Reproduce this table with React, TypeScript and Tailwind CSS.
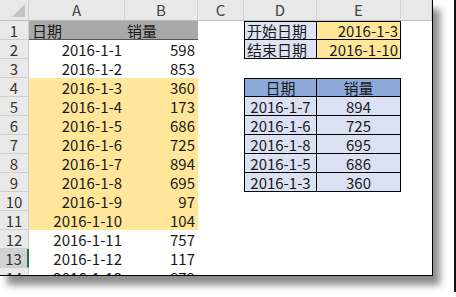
const sales: [string, number][] = [
  ["2016-1-1", 598],
  ["2016-1-2", 853],
  ["2016-1-3", 360],
  ["2016-1-4", 173],
  ["2016-1-5", 686],
  ["2016-1-6", 725],
  ["2016-1-7", 894],
  ["2016-1-8", 695],
  ["2016-1-9", 97],
  ["2016-1-10", 104],
  ["2016-1-11", 757],
  ["2016-1-12", 117],
  ["2016-1-13", 879],
]

const top5: [string, number][] = [
  ["2016-1-7", 894],
  ["2016-1-6", 725],
  ["2016-1-8", 695],
  ["2016-1-5", 686],
  ["2016-1-3", 360],
]

const letters = [
  { l: "A", w: "w-[96px]" },
  { l: "B", w: "w-[73px]" },
  { l: "C", w: "w-[46px]" },
  { l: "D", w: "w-[73px]" },
  { l: "E", w: "w-[84px]" },
  { l: "", w: "w-[31px]" },
]

const SideCells = ({ row }: { row: number }) => {
  if (row === 1 || row === 2) {
    const first = row === 1
    return (
      <>
        <div className={`w-[73px] shrink-0 flex items-center pl-[2px] bg-[#dde3f2] border-l border-r border-b border-black ${first ? "border-t" : ""}`}>
          {first ? "开始日期" : "结束日期"}
        </div>
        <div className={`w-[84px] shrink-0 flex items-center justify-end pr-[2px] bg-[#ffe699] border-r border-b border-black ${first ? "border-t" : ""}`}>
          {first ? "2016-1-3" : "2016-1-10"}
        </div>
      </>
    )
  }
  if (row === 4) {
    return (
      <>
        <div className="w-[73px] shrink-0 flex items-center justify-center bg-[#8eaadb] border border-black">日期</div>
        <div className="w-[84px] shrink-0 flex items-center justify-center bg-[#8eaadb] border-t border-r border-b border-black">销量</div>
      </>
    )
  }
  if (row >= 5 && row <= 9) {
    const [d, n] = top5[row - 5]
    return (
      <>
        <div className="w-[73px] shrink-0 flex items-center justify-center bg-[#d9e1f2] border-l border-r border-b border-black">{d}</div>
        <div className="w-[84px] shrink-0 flex items-center justify-center bg-[#d9e1f2] border-r border-b border-black">{n}</div>
      </>
    )
  }
  return (
    <>
      <div className="w-[73px] shrink-0" />
      <div className="w-[84px] shrink-0" />
    </>
  )
}

export default function App() {
  return (
    <div className="w-[456px] h-[297px] bg-white flex relative overflow-hidden font-['Noto_Sans_CJK_SC',sans-serif] text-[15px] text-[#1a1a1a]">
      <div className="w-[433px] h-[276px] shrink-0 flex flex-col overflow-hidden bg-white border-r border-b border-black shadow-[7px_9px_7px_rgba(0,0,0,0.45)]">
        {/* column headers */}
        <div className="flex h-[21px] shrink-0 bg-[#e9e9e9] border-b border-[#bdbdbd] text-[#444]">
          <div className="w-[29px] shrink-0 relative border-r border-[#cfcfcf]">
            <div className="absolute right-[3px] bottom-[3px] w-0 h-0 border-l-[13px] border-l-transparent border-b-[13px] border-b-[#c4c4c4]" />
          </div>
          {letters.map((c, i) => (
            <div key={i} className={`${c.w} shrink-0 flex items-center justify-center border-r border-[#d4d4d4]`}>
              {c.l}
            </div>
          ))}
        </div>

        {/* row 1 */}
        <div className="flex h-[19px] shrink-0 leading-none">
          <div className="w-[29px] shrink-0 flex items-center justify-center bg-[#e9e9e9] border-r border-b border-[#cfcfcf] text-[#333]">1</div>
          <div className="w-[96px] shrink-0 flex items-center pl-[3px] bg-[#a9a9a9] border-b border-[#555]">日期</div>
          <div className="w-[73px] shrink-0 flex items-center pl-[2px] bg-[#a9a9a9] border-b border-[#555]">销量</div>
          <div className="w-[46px] shrink-0" />
          <SideCells row={1} />
        </div>

        {sales.map(([d, n], i) => {
          const row = i + 2
          const hl = row >= 4 && row <= 11
          const sel = row === 13
          return (
            <div key={row} className="flex h-[19px] shrink-0 leading-none">
              <div className={`w-[29px] shrink-0 flex items-center justify-center border-b border-[#cfcfcf] text-[#333] ${sel ? "bg-[#d2d2d2] border-r-2 border-r-[#217346]" : "bg-[#e9e9e9] border-r"}`}>
                {row}
              </div>
              <div className={`w-[96px] shrink-0 flex items-center justify-end pr-[3px] ${hl ? "bg-[#ffe699]" : ""}`}>{d}</div>
              <div className={`w-[73px] shrink-0 flex items-center justify-end pr-[3px] ${hl ? "bg-[#ffe699]" : ""}`}>{n}</div>
              <div className="w-[46px] shrink-0" />
              <SideCells row={row} />
            </div>
          )
        })}
      </div>
      <div className="absolute right-0 top-0 w-[2px] h-[292px] bg-[#111]" />
    </div>
  )
}
